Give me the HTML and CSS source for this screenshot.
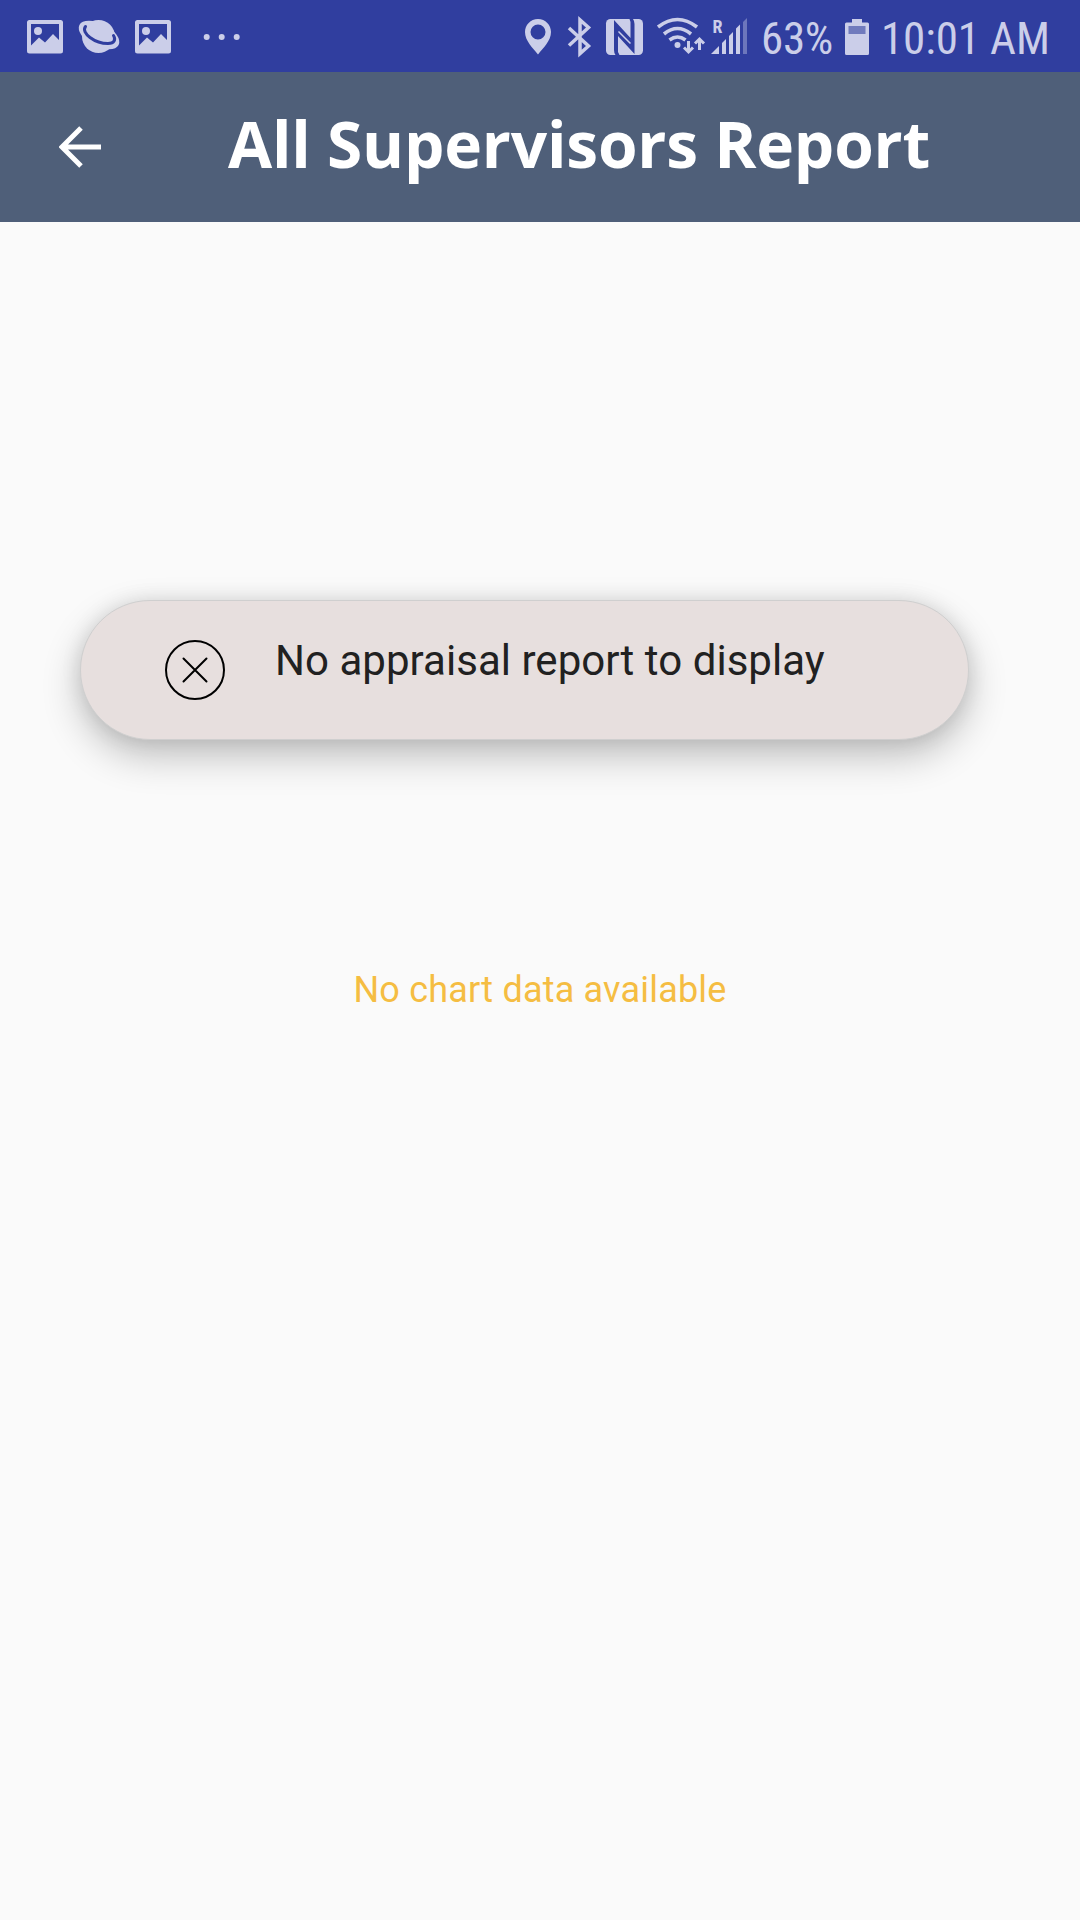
FILE: index.html
```html
<!DOCTYPE html>
<html lang="en">
<head>
<meta charset="utf-8">
<title>All Supervisors Report</title>
<link rel="stylesheet" href="styles.css">
</head>
<body>
<div class="screen">
  <header class="status-bar">
    <svg class="notifications" width="250" height="72" viewBox="0 0 250 72" aria-hidden="true">
      <defs>
        <g id="picture">
          <path fill-rule="evenodd" d="M2.500 0H33.500Q36 0 36 2.500V31Q36 33.500 33.500 33.500H2.500Q0 33.500 0 31V2.500Q0 0 2.500 0ZM4 4V25.500L12 17.500L18 22.500L26 14L32 20V4Z"/>
          <circle cx="11" cy="11" r="4"/>
        </g>
      </defs>
      <use href="#picture" x="27" y="20"/>
      <use href="#picture" x="135" y="20"/>
      <g>
        <circle cx="98.500" cy="36.500" r="16.500"/>
        <ellipse cx="99" cy="35" rx="22" ry="11.500" transform="rotate(27 99 35)"/>
        <path class="ring-gap" d="M85.500 26.500C80.500 33 95 43.500 108 43.500C114.500 43.500 116 39.500 113.500 35.500"/>
      </g>
      <circle cx="206.700" cy="37" r="3"/>
      <circle cx="221.700" cy="37" r="3"/>
      <circle cx="236.700" cy="37" r="3"/>
    </svg>
    <div class="system">
      <svg width="230" height="72" viewBox="520 0 230 72" aria-hidden="true">
        <path fill-rule="evenodd" d="M538 19C530.500 19 525 25 525 32C525 41 533 48 538 54.500C543 48 551 41 551 32C551 25 545.500 19 538 19ZM538 24.500A7.500 7.500 0 1 1 538 39.500A7.500 7.500 0 1 1 538 24.500Z"/>
        <path class="bluetooth" d="M569 28L588.500 46L580 53.500V20L588.500 27.500L569 45.500"/>
        <rect x="606" y="19" width="37" height="36" rx="4.500"/>
        <path class="nfc" d="M614 20L630.500 38V22L629.500 19H633Q634.500 21 634.500 24V54L618 36V52L619.500 55H615.500Q614 53 614 50Z"/>
        <path class="nfc-slit" d="M618.500 31.500L630.500 43.500"/>
        <g class="wifi">
          <path d="M658 27Q677.500 12 697 27"/>
          <path d="M664 34Q677.500 23 691 34"/>
          <path d="M669.500 40Q677.500 34 685.500 40"/>
        </g>
        <circle cx="677.500" cy="45" r="3"/>
        <path class="arrows" d="M688.500 41V51M684 47.500L688.500 52L693 47.500M699.500 50V40M695 43.500L699.500 39L704 43.500"/>
        <path d="M711 54L719 46V54ZM722 43L726 39V54H722ZM729 36L733 32V54H729ZM736 28.500L740 24.500V54H736Z"/>
        <path opacity=".4" d="M743 22L747 18V54H743Z"/>
        <text class="roaming" x="712.500" y="33">R</text>
      </svg>
      <span class="battery-level">63%</span>
      <svg class="battery" width="24" height="36" viewBox="0 0 24 36" aria-hidden="true">
        <path d="M7 0H17V3.500H22.500Q24 3.500 24 5V34.500Q24 36 22.500 36H1.500Q0 36 0 34.500V5Q0 3.500 1.500 3.500H7Z"/>
        <rect class="battery-used" x="3.500" y="7" width="17" height="8"/>
      </svg>
      <span class="clock">10:01 AM</span>
    </div>
  </header>
  <div class="app-bar">
    <svg class="back" width="42" height="42" viewBox="0 0 42 42" role="img" aria-label="Back">
      <path d="M42 21H5M22 2L3 21L22 40"/>
    </svg>
    <h1 class="title">All Supervisors Report</h1>
  </div>
  <main class="content">
    <div class="toast" role="alert">
      <svg class="error" width="60" height="60" viewBox="0 0 60 60" aria-hidden="true">
        <circle cx="30" cy="30" r="29"/>
        <path d="M18.500 18.500L41.500 41.500M41.500 18.500L18.500 41.500"/>
      </svg>
      <p class="message">No appraisal report to display</p>
    </div>
    <p class="empty">No chart data available</p>
  </main>
</div>
</body>
</html>
```
FILE: styles.css
```css
* { box-sizing: border-box; }
body { margin: 0; font-family: Roboto, sans-serif; }
.screen {
  display: flex;
  flex-direction: column;
  width: 1080px;
  height: 1920px;
  background: #fafafa;
  overflow: hidden;
}
.status-bar {
  display: flex;
  justify-content: space-between;
  height: 72px;
  background: #303e9f;
  color: #cbcee9;
  fill: #cbcee9;
  font-size: 45px;
  font-stretch: 75%;
  line-height: 72px;
}
.ring-gap { fill: none; stroke: #303e9f; stroke-width: 3; stroke-linecap: round; }
.bluetooth { fill: none; stroke: #cbcee9; stroke-width: 3.500; }
.nfc { fill: #303e9f; }
.nfc-slit { fill: none; stroke: #cbcee9; stroke-width: 1.500; }
.wifi { fill: none; stroke: #cbcee9; stroke-width: 3.600; }
.arrows { fill: none; stroke: #cbcee9; stroke-width: 3; }
.roaming { font-size: 18px; font-weight: 700; }
.system {
  display: flex;
  width: 560px;
}
.battery-level, .clock {
  flex: none;
  white-space: nowrap;
  padding-top: 3px;
}
.battery-level { width: 84px; margin-left: 11px; letter-spacing: -.3px; }
.battery { flex: none; margin-top: 19px; }
.battery-used { fill: #717bbd; }
.clock { margin-left: 12px; letter-spacing: -.1px; }
.app-bar {
  display: flex;
  align-items: center;
  height: 150px;
  padding-left: 59px;
  background: #4f5f79;
}
.back { fill: none; stroke: #fff; stroke-width: 5; }
.title {
  margin: -7px 0 0 127px;
  color: #fff;
  font: 700 64px/80px "Open Sans", sans-serif;
  letter-spacing: -.2px;
  white-space: nowrap;
}
.content {
  display: flex;
  flex-direction: column;
  padding-top: 378px;
}
.toast {
  display: flex;
  width: 889px;
  height: 140px;
  margin-left: 80px;
  padding: 39px 0 0 84px;
  border: 1px solid #cfcfcf;
  border-radius: 70px;
  background: #e7dfde;
  box-shadow: 0 16px 38px rgba(0, 0, 0, .24), 0 0 20px rgba(0, 0, 0, .1);
}
.error { fill: none; stroke: #000; stroke-width: 2; stroke-linecap: round; }
.message {
  margin: -4px 0 0 50px;
  color: #212121;
  font-size: 42px;
  letter-spacing: .04px;
  line-height: 50px;
  white-space: nowrap;
}
.empty {
  margin: 228px 0 0;
  color: #f5bd42;
  font-size: 36px;
  letter-spacing: .2px;
  line-height: 44px;
  text-align: center;
}
```
